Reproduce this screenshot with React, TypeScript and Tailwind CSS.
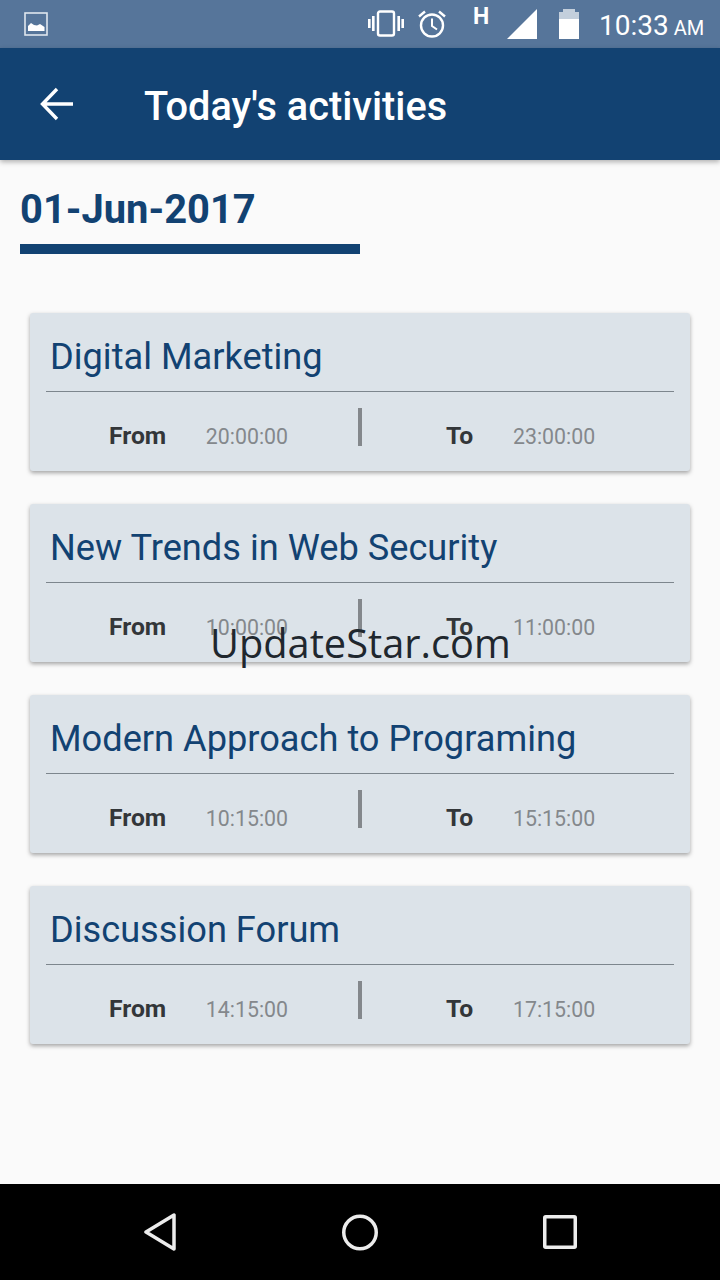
const activities = [
  { title: "Digital Marketing", from: "20:00:00", to: "23:00:00" },
  { title: "New Trends in Web Security", from: "10:00:00", to: "11:00:00" },
  { title: "Modern Approach to Programing", from: "10:15:00", to: "15:15:00" },
  { title: "Discussion Forum", from: "14:15:00", to: "17:15:00" },
];

const StatusBar = () => (
  <div className="flex h-12 items-center bg-[#56759a] pl-6 pr-[16px] text-white">
    <svg width="24" height="24" viewBox="0 0 24 24" className="shrink-0">
      <rect x="1" y="1" width="22" height="22" fill="none" stroke="#dfe6ee" strokeWidth="1.6" />
      <path d="M4 19v-5l3-3 3 2 3 .5 3-1.5 3 2 1.5 1v4z" fill="#fff" />
    </svg>
    <div className="ml-auto flex items-center">
      <svg width="36" height="28" viewBox="0 0 36 28">
        <rect x="10" y="1.5" width="16" height="24" rx="2" fill="none" stroke="#fff" strokeWidth="2.4" />
        <rect x="0" y="9" width="2.6" height="9" fill="#fff" />
        <rect x="4" y="6" width="2.6" height="15" fill="#fff" />
        <rect x="29.4" y="6" width="2.6" height="15" fill="#fff" />
        <rect x="33.4" y="9" width="2.6" height="9" fill="#fff" />
      </svg>
      <svg width="30" height="30" viewBox="0 0 30 30" className="ml-[13px]">
        <circle cx="15" cy="16.5" r="11" fill="none" stroke="#fff" strokeWidth="2.4" />
        <path d="M15 9.5v7.5l5 3.5" fill="none" stroke="#fff" strokeWidth="2" />
        <path d="M2 7.5 8 2.5M28 7.5l-6-5" fill="none" stroke="#fff" strokeWidth="2.4" />
      </svg>
      <span className="ml-[26px] mb-[16px] w-[18px] text-[23px] leading-none font-bold">H</span>
      <svg width="30" height="30" viewBox="0 0 30 30" className="ml-[16px]">
        <path d="M30 0v30H0z" fill="#fff" />
      </svg>
      <svg width="20" height="30" viewBox="0 0 20 30" className="ml-[22px]">
        <path d="M4 0h12v3h4v7H0V3h4z" fill="#c3cfdc" />
        <rect y="10" width="20" height="20" fill="#fff" />
      </svg>
      <span className="ml-[20px] w-[105px] pt-1 text-[28px] leading-none whitespace-nowrap">
        10:33 <span className="-ml-[2px] text-[20px]">AM</span>
      </span>
    </div>
  </div>
);

const ActivityCard = ({ title, from, to }: { title: string; from: string; to: string }) => (
  <div className="h-[158px] rounded-[3px] bg-[#dce3e9] px-4 shadow-[0_2px_4px_rgba(0,0,0,0.35)]">
    <div className="flex h-[79px] items-center border-b border-[#7d868d] pl-1 pt-[11px] text-[36.2px] leading-none text-[#124272]">
      {title}
    </div>
    <div className="flex pt-4">
      <div className="flex w-[312px] items-center justify-between pl-[63px] pr-[70px] pt-4">
        <span className="text-[24.7px] leading-none font-bold text-[#333639]">From</span>
        <span className="text-[21.3px] leading-none text-[#84888c]">{from}</span>
      </div>
      <div className="h-[38px] w-1 bg-[#84888c]" />
      <div className="flex flex-1 items-center pl-[84px] pt-4">
        <span className="w-[67px] text-[24.7px] leading-none font-bold text-[#333639]">To</span>
        <span className="text-[21.3px] leading-none text-[#84888c]">{to}</span>
      </div>
    </div>
  </div>
);

export default function App() {
  return (
    <div className="relative flex h-[1280px] w-[720px] flex-col overflow-hidden bg-[#fafafa] font-['Roboto',sans-serif]">
      <StatusBar />
      <div className="z-10 flex h-[112px] items-center bg-[#124272] pl-10 shadow-[0_2px_5px_rgba(0,0,0,0.3)]">
        <svg width="34" height="34" viewBox="0 0 34 34" fill="none" stroke="#fff" strokeWidth="3.4" className="shrink-0">
          <path d="M33 17H3M17 2 2.5 17 17 32" />
        </svg>
        <h1 className="ml-[70px] pt-[5px] text-[39.75px] leading-none font-medium text-white">Today's activities</h1>
      </div>
      <div className="flex-1 px-[20px] pt-[26px]">
        <div className="w-[340px] border-b-10 border-[#124272] pb-[10px] text-[39.9px] leading-[48px] font-bold text-[#124272]">
          01-Jun-2017
        </div>
        <div className="mt-[59px] flex flex-col gap-[33px] px-2.5">
          {activities.map((a) => (
            <ActivityCard key={a.title} {...a} />
          ))}
        </div>
      </div>
      <div className="flex h-24 items-center justify-between bg-black pl-[144px] pr-[143px]">
        <svg width="32" height="38" viewBox="0 0 32 38" fill="none" stroke="#ececec" strokeWidth="3.5" strokeLinejoin="round">
          <path d="M30 2v34L2 19z" />
        </svg>
        <svg width="36" height="37" viewBox="0 0 36 37" fill="none" stroke="#ececec" strokeWidth="3.5">
          <circle cx="18" cy="18.5" r="16.25" />
        </svg>
        <svg width="34" height="34" viewBox="0 0 34 34" fill="none" stroke="#ececec" strokeWidth="3.5" strokeLinejoin="round">
          <rect x="1.75" y="1.75" width="30.5" height="30.5" rx="1" />
        </svg>
      </div>
      <span className="absolute left-[210px] top-[615px] z-20 font-['Open_Sans',sans-serif] text-[39.75px] leading-[56px] text-[#1f272e]">
        UpdateStar.com
      </span>
    </div>
  );
}
